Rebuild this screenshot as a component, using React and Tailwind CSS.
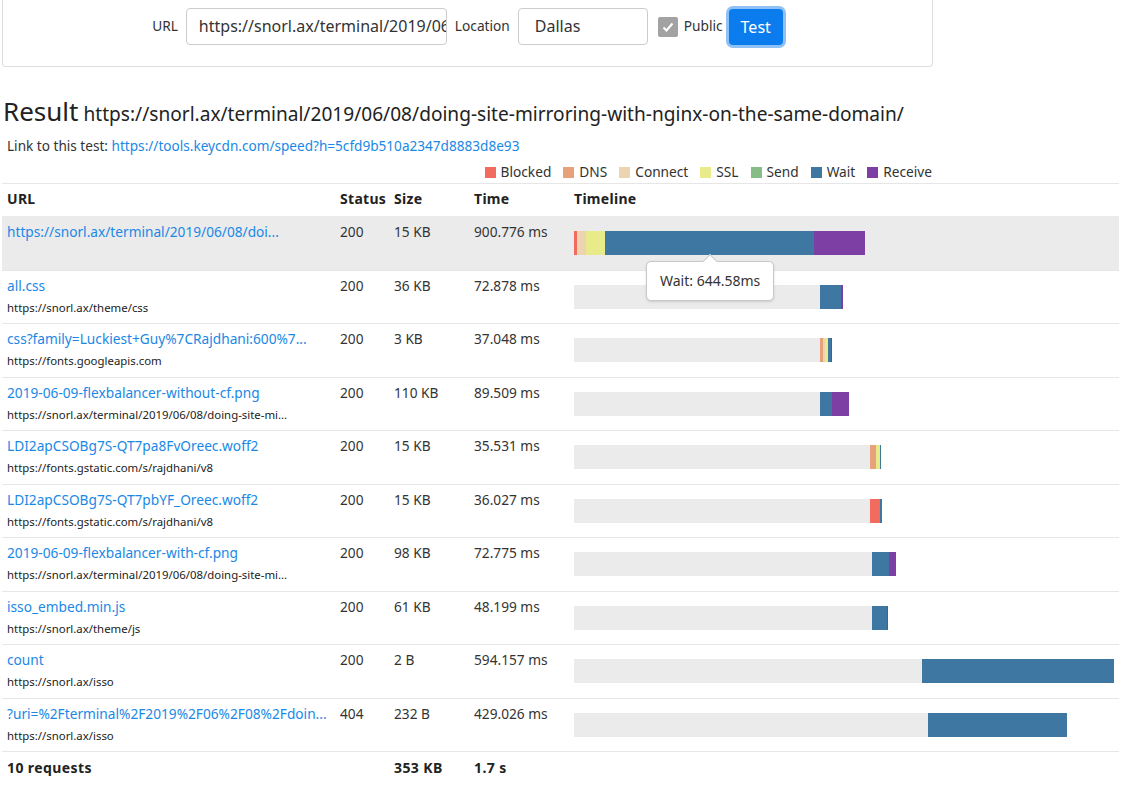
import React from "react";

const C = {
  blocked: "#f26b5f",
  dns: "#e8a27b",
  connect: "#ecd4b0",
  ssl: "#e9ea8a",
  send: "#86bd86",
  wait: "#3f77a3",
  receive: "#7e3fa5",
};

const legend = [
  ["Blocked", C.blocked],
  ["DNS", C.dns],
  ["Connect", C.connect],
  ["SSL", C.ssl],
  ["Send", C.send],
  ["Wait", C.wait],
  ["Receive", C.receive],
];

// timeline: offset (px before first segment) + segments [width, color]
const requests = [
  {
    name: "https://snorl.ax/terminal/2019/06/08/doi...",
    host: "",
    status: 200,
    size: "15 KB",
    time: "900.776 ms",
    offset: 0,
    segs: [[3, C.blocked], [9, C.connect], [19, C.ssl], [209, C.wait], [51, C.receive]],
  },
  {
    name: "all.css",
    host: "https://snorl.ax/theme/css",
    status: 200,
    size: "36 KB",
    time: "72.878 ms",
    offset: 246,
    segs: [[21, C.wait], [1.5, C.receive]],
  },
  {
    name: "css?family=Luckiest+Guy%7CRajdhani:600%7...",
    host: "https://fonts.googleapis.com",
    status: 200,
    size: "3 KB",
    time: "37.048 ms",
    offset: 246,
    segs: [[3, C.dns], [2, C.connect], [3, C.ssl], [3, C.wait], [1, C.receive]],
  },
  {
    name: "2019-06-09-flexbalancer-without-cf.png",
    host: "https://snorl.ax/terminal/2019/06/08/doing-site-mi...",
    status: 200,
    size: "110 KB",
    time: "89.509 ms",
    offset: 246,
    segs: [[12, C.wait], [17, C.receive]],
  },
  {
    name: "LDI2apCSOBg7S-QT7pa8FvOreec.woff2",
    host: "https://fonts.gstatic.com/s/rajdhani/v8",
    status: 200,
    size: "15 KB",
    time: "35.531 ms",
    offset: 296,
    segs: [[6, C.dns], [4, C.ssl], [1, C.wait]],
  },
  {
    name: "LDI2apCSOBg7S-QT7pbYF_Oreec.woff2",
    host: "https://fonts.gstatic.com/s/rajdhani/v8",
    status: 200,
    size: "15 KB",
    time: "36.027 ms",
    offset: 296,
    segs: [[10, C.blocked], [2, C.wait]],
  },
  {
    name: "2019-06-09-flexbalancer-with-cf.png",
    host: "https://snorl.ax/terminal/2019/06/08/doing-site-mi...",
    status: 200,
    size: "98 KB",
    time: "72.775 ms",
    offset: 298,
    segs: [[17, C.wait], [7, C.receive]],
  },
  {
    name: "isso_embed.min.js",
    host: "https://snorl.ax/theme/js",
    status: 200,
    size: "61 KB",
    time: "48.199 ms",
    offset: 298,
    segs: [[15, C.wait], [1, C.receive]],
  },
  {
    name: "count",
    host: "https://snorl.ax/isso",
    status: 200,
    size: "2 B",
    time: "594.157 ms",
    offset: 348,
    segs: [[192, C.wait]],
  },
  {
    name: "?uri=%2Fterminal%2F2019%2F06%2F08%2Fdoin...",
    host: "https://snorl.ax/isso",
    status: 404,
    size: "232 B",
    time: "429.026 ms",
    offset: 354,
    segs: [[139, C.wait]],
  },
];

const Timeline = ({ offset, segs }) => (
  <div className="flex h-[24px] w-[540px]">
    {offset > 0 && <div className="h-full bg-[#ebebeb]" style={{ width: offset }} />}
    {segs.map(([w, color], i) => (
      <div key={i} className="h-full" style={{ width: w, background: color }} />
    ))}
  </div>
);

const Tooltip = () => (
  <div className="absolute left-[77px] top-[44px] z-10">
    <div className="relative rounded-[5px] border border-[#c8c8c8] bg-white px-[13px] py-[9px] text-[14px] leading-[20px] text-[#333] shadow-sm whitespace-nowrap">
      Wait: 644.58ms
      <div className="absolute left-[58px] top-[-6px] h-[10px] w-[10px] rotate-45 border-l border-t border-[#c8c8c8] bg-white" />
    </div>
  </div>
);

export default function App() {
  return (
    <div
      className="min-h-screen bg-white text-[#333]"
      style={{ fontFamily: '"Noto Sans", "Open Sans", sans-serif' }}
    >
      {/* test form */}
      <div className="ml-[2px] w-[931px] rounded-b-[4px] border-x border-b border-[#ddd] pt-[8px] pb-[21px]">
        <div className="flex items-center justify-center">
          <label className="mr-[8px] text-[13.7px]">URL</label>
          <div className="h-[37px] w-[261px] overflow-hidden rounded-[4px] border border-[#ccc] pl-[12px] text-[16px] leading-[35px] whitespace-nowrap">
            https://snorl.ax/terminal/2019/06
          </div>
          <label className="ml-[8px] mr-[8px] text-[13.7px]">Location</label>
          <div className="h-[37px] w-[130px] rounded-[4px] border border-[#ccc] pl-[16px] text-[16px] leading-[35px]">
            Dallas
          </div>
          <div className="ml-[10px] flex h-[20px] w-[20px] items-center justify-center rounded-[2px] bg-[#a2a2a2]">
            <svg width="14" height="14" viewBox="0 0 14 14">
              <path d="M2.5 7.5 L5.5 10.5 L11.5 3.5" fill="none" stroke="white" strokeWidth="2" />
            </svg>
          </div>
          <span className="ml-[6px] text-[13.7px]">Public</span>
          <button className="ml-[6px] h-[36px] rounded-[4px] bg-[#0a7cee] px-[12px] text-[16px] text-white ring-[3px] ring-[#8fc1f6]">
            Test
          </button>
        </div>
      </div>

      {/* result heading */}
      <div className="mt-[28px] ml-[3px] flex items-baseline gap-[5px] whitespace-nowrap">
        <span className="text-[26px] leading-[32px] text-[#222]">Result</span>
        <span className="text-[19.1px] leading-[32px] text-[#222]">
          https://snorl.ax/terminal/2019/06/08/doing-site-mirroring-with-nginx-on-the-same-domain/
        </span>
      </div>
      <div className="mt-[6px] ml-[7px] text-[13.6px] leading-[20px]">
        Link to this test:{" "}
        <a className="text-[#1a88e6]" href="#">
          https://tools.keycdn.com/speed?h=5cfd9b510a2347d8883d8e93
        </a>
      </div>

      {/* legend */}
      <div className="mt-[6px] flex w-[932px] justify-end gap-[12px] text-[13.7px] leading-[20px]">
        {legend.map(([label, color]) => (
          <div key={label} className="flex items-center gap-[5px]">
            <span className="h-[11px] w-[11px]" style={{ background: color }} />
            <span>{label}</span>
          </div>
        ))}
      </div>

      {/* table */}
      <div className="ml-[2px] mt-[1px] w-[1117px] text-[13.7px]">
        <div className="flex h-[33px] border-t border-[#e6e6e6] pt-[5px] text-[14px] font-bold leading-[20px] tracking-[0.3px] text-[#222]">
          <div className="w-[333px] pl-[5px]">URL</div>
          <div className="w-[54px] pl-[5px]">Status</div>
          <div className="w-[80px] pl-[5px]">Size</div>
          <div className="w-[100px] pl-[5px]">Time</div>
          <div className="flex-1 pl-[5px]">Timeline</div>
        </div>
        {requests.map((r, i) => (
          <div
            key={i}
            className={`flex h-[53.5px] border-t ${i === 0 ? "border-[#ebebeb] bg-[#ebebeb]" : "border-[#e6e6e6]"}`}
          >
            <div className="w-[333px] pl-[5px] pt-[5px] whitespace-nowrap">
              <div className="leading-[20px] text-[#1a88e6]">{r.name}</div>
              {r.host && <div className="mt-[4px] text-[11.4px] leading-[16px] text-[#222]">{r.host}</div>}
            </div>
            <div className="w-[54px] pl-[5px] pt-[5px] leading-[20px]">{r.status}</div>
            <div className="w-[80px] pl-[5px] pt-[5px] leading-[20px]">{r.size}</div>
            <div className="w-[100px] pl-[5px] pt-[5px] leading-[20px]">{r.time}</div>
            <div className="relative flex-1 pl-[5px] pt-[14px]">
              <Timeline offset={r.offset} segs={r.segs} />
              {i === 0 && <Tooltip />}
            </div>
          </div>
        ))}
        <div className="flex h-[34px] border-t border-[#e6e6e6] pt-[6px] text-[14px] font-bold leading-[20px] tracking-[0.4px] text-[#222]">
          <div className="w-[387px] pl-[5px]">10 requests</div>
          <div className="w-[80px] pl-[5px]">353 KB</div>
          <div className="w-[100px] pl-[5px]">1.7 s</div>
        </div>
      </div>
    </div>
  );
}
